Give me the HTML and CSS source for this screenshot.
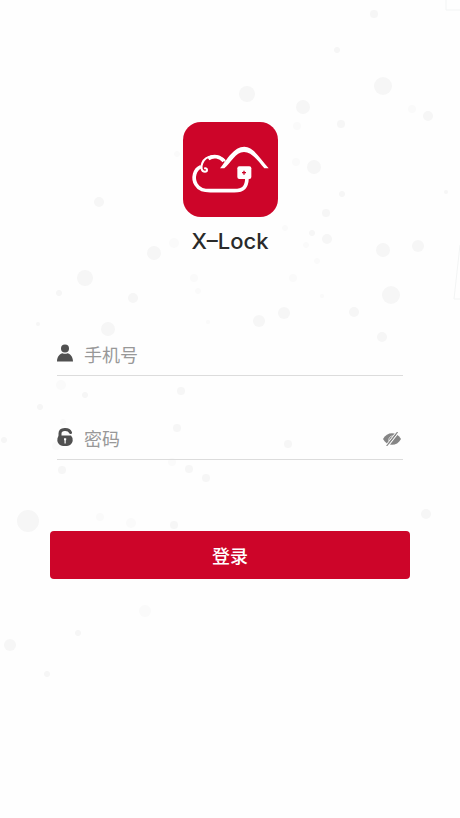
FILE: index.html
```html
<!DOCTYPE html>
<html lang="zh-CN">
<head>
<meta charset="utf-8">
<meta name="viewport" content="width=device-width, initial-scale=1">
<title>X–Lock</title>
<link rel="stylesheet" href="styles.css">
</head>
<body>
<svg class="backdrop" viewBox="0 0 460 818" preserveAspectRatio="xMidYMin slice" aria-hidden="true">
  <g fill="#f6f6f6">
    <circle cx="374" cy="14" r="4"/><circle cx="337" cy="50" r="3"/><circle cx="383" cy="86" r="9"/>
    <circle cx="247" cy="94" r="8"/><circle cx="303" cy="107" r="7"/><circle cx="341" cy="124" r="4"/>
    <circle cx="428" cy="116" r="5"/><circle cx="314" cy="167" r="7"/><circle cx="342" cy="194" r="3"/>
    <circle cx="446" cy="192" r="2"/><circle cx="326" cy="213" r="4"/><circle cx="312" cy="233" r="3"/>
    <circle cx="327" cy="239" r="5"/><circle cx="383" cy="250" r="7"/><circle cx="418" cy="246" r="6"/>
    <circle cx="391" cy="295" r="9"/><circle cx="354" cy="312" r="5"/><circle cx="284" cy="313" r="6"/>
    <circle cx="259" cy="321" r="6"/><circle cx="382" cy="337" r="5"/><circle cx="99" cy="202" r="5"/>
    <circle cx="154" cy="253" r="7"/><circle cx="85" cy="278" r="8"/><circle cx="59" cy="293" r="3"/>
    <circle cx="133" cy="298" r="5"/><circle cx="108" cy="329" r="7"/><circle cx="38" cy="324" r="2"/>
    <circle cx="181" cy="391" r="4"/><circle cx="85" cy="395" r="3"/><circle cx="40" cy="407" r="3"/>
    <circle cx="4" cy="440" r="3"/><circle cx="177" cy="428" r="4"/><circle cx="288" cy="444" r="4"/>
    <circle cx="62" cy="470" r="4"/><circle cx="189" cy="469" r="4"/><circle cx="206" cy="478" r="4"/>
    <circle cx="28" cy="521" r="11"/><circle cx="174" cy="525" r="4"/><circle cx="426" cy="514" r="5"/>
    <circle cx="78" cy="633" r="3"/><circle cx="10" cy="645" r="6"/><circle cx="47" cy="674" r="3"/>
  </g>
  <g fill="#fafafa">
    <circle cx="412" cy="109" r="4"/><circle cx="297" cy="126" r="4"/><circle cx="296" cy="162" r="4"/>
    <circle cx="285" cy="228" r="3"/><circle cx="306" cy="245" r="3"/><circle cx="317" cy="261" r="3"/>
    <circle cx="293" cy="278" r="4"/><circle cx="322" cy="296" r="2"/><circle cx="174" cy="243" r="5"/>
    <circle cx="194" cy="278" r="4"/><circle cx="198" cy="291" r="3"/><circle cx="177" cy="154" r="3"/>
    <circle cx="208" cy="322" r="2"/><circle cx="61" cy="385" r="5"/><circle cx="56" cy="446" r="4"/>
    <circle cx="172" cy="462" r="4"/><circle cx="100" cy="517" r="4"/><circle cx="131" cy="523" r="5"/>
    <circle cx="145" cy="611" r="6"/><circle cx="63" cy="422" r="3"/>
  </g>
  <path d="M446 0v10h14M460 245l-6 54h6" fill="none" stroke="#f2f4f4"/>
</svg>
<main class="login">
  <header class="brand">
    <svg class="logo" viewBox="38 35 285 285" aria-hidden="true">
      <rect x="38" y="35" width="285" height="285" rx="54" fill="#cd0529"/>
      <path d="M149 174C170 147 191 109 222 109C249 109 269 144 295 174H282C262 149 243 125 221 125C195 125 182 158 162 174Z" fill="#fff"/>
      <path d="M163 151C143 131 106 134 96 158C90 172 94 184 104 184C112 184 112 173 104 174" fill="none" stroke="#fff" stroke-width="6" stroke-linecap="round"/>
      <path d="M114 145C129 134 149 138 161 152" fill="none" stroke="#fff" stroke-width="11"/>
      <path d="M92 169C72 177 66 204 77 222C87 239 101 241 120 241H192C220 241 229 230 230 203" fill="none" stroke="#fff" stroke-width="11"/>
      <rect x="201" y="168" width="42" height="38" rx="6" fill="#fff"/>
      <path d="M221 181v12M215 187h12" stroke="#cd0529" stroke-width="4"/>
    </svg>
    <h1 class="name">X–Lock</h1>
  </header>
  <form class="form">
    <div class="fields">
      <div class="field">
        <label class="field-label" for="phone" aria-label="手机号">
          <svg class="icon" viewBox="0 0 16 18" fill="#505050" aria-hidden="true">
            <circle cx="8" cy="4.500" r="4"/>
            <path d="M0 17.500C0 12.500 3 9.700 5.500 9.200Q8 10.500 10.500 9.200C13 9.700 16 12.500 16 17.500Z"/>
          </svg>
        </label>
        <input class="input" id="phone" type="tel" placeholder="手机号">
      </div>
      <div class="field">
        <label class="field-label" for="password" aria-label="密码">
          <svg class="icon" viewBox="0 0 16 18" aria-hidden="true">
            <path d="M3 9V5.500C3 .6 11.800 .2 13.500 4.500" fill="none" stroke="#505050" stroke-width="3" stroke-linecap="round"/>
            <path d="M2 7.500H14Q16 9.500 15.700 13Q14.500 17.500 10 18H6Q1.500 17.500.3 13Q0 9.500 2 7.500Z" fill="#505050"/>
            <path d="M7 10.200h2.200v1.800l-.5.600v3H7.500v-3l-.5-.6Z" fill="#fff"/>
          </svg>
        </label>
        <input class="input" id="password" type="password" placeholder="密码">
        <button class="reveal" type="button" aria-label="显示密码">
          <svg class="eye" viewBox="0 0 18 14" aria-hidden="true">
            <path d="M0 7C4-.8 14-.8 18 7C14 14.800 4 14.800 0 7Z" fill="#858585"/>
            <path d="M6 9C5 6 8 3 11 4.300" fill="none" stroke="#ddd"/>
            <path d="M2.500 14L13.500 0M4.700 14.500L15.700.5" stroke="#fefefe" stroke-width="1.200"/>
            <path d="M3.600 14L14.600 0" stroke="#858585" stroke-width="1.200"/>
          </svg>
        </button>
      </div>
    </div>
    <button class="submit" type="submit">登录</button>
  </form>
</main>
</body>
</html>
```
FILE: styles.css
```css
* {
  box-sizing: border-box;
}

body {
  margin: 0;
  min-height: 100vh;
  background: #fefefe;
  font-family: "Noto Sans CJK SC", sans-serif;
}

.backdrop {
  position: absolute;
  inset: 0;
  width: 100%;
  height: 100%;
  z-index: -1;
}

.login {
  padding: 122px 50px 40px;
}

.brand {
  display: flex;
  flex-direction: column;
  align-items: center;
  gap: 8px;
}

.logo {
  width: 95px;
  height: 95px;
}

.name {
  margin: 0;
  color: #2a2a2a;
  font: 500 22px/32px Inter, sans-serif;
}

.form {
  display: flex;
  flex-direction: column;
  gap: 71px;
  margin-top: 78px;
}

.fields {
  display: flex;
  flex-direction: column;
  gap: 43px;
  padding: 0 7px;
}

.field {
  display: flex;
  align-items: center;
  height: 41px;
  border-bottom: 1px solid #dcdcdc;
}

.field-label,
.reveal {
  display: flex;
}

.icon {
  width: 16px;
  height: 18px;
  margin-bottom: 4px;
}

.input {
  flex: 1;
  min-width: 0;
  height: 38px;
  margin: 0 0 2px 11px;
  padding: 0;
  border: 0;
  outline: 0;
  background: transparent;
  color: #333;
  font: 18px/24px "Noto Sans CJK SC", sans-serif;
}

.input::placeholder {
  color: #989898;
  opacity: 1;
}

.reveal {
  padding: 0 2px 0 0;
  border: 0;
  background: transparent;
}

.eye {
  width: 18px;
  height: 14px;
}

.submit {
  height: 48px;
  border: 0;
  border-radius: 4px;
  background: #cd0529;
  color: #fff;
  font: 500 18px/24px "Noto Sans CJK SC", sans-serif;
}
```
